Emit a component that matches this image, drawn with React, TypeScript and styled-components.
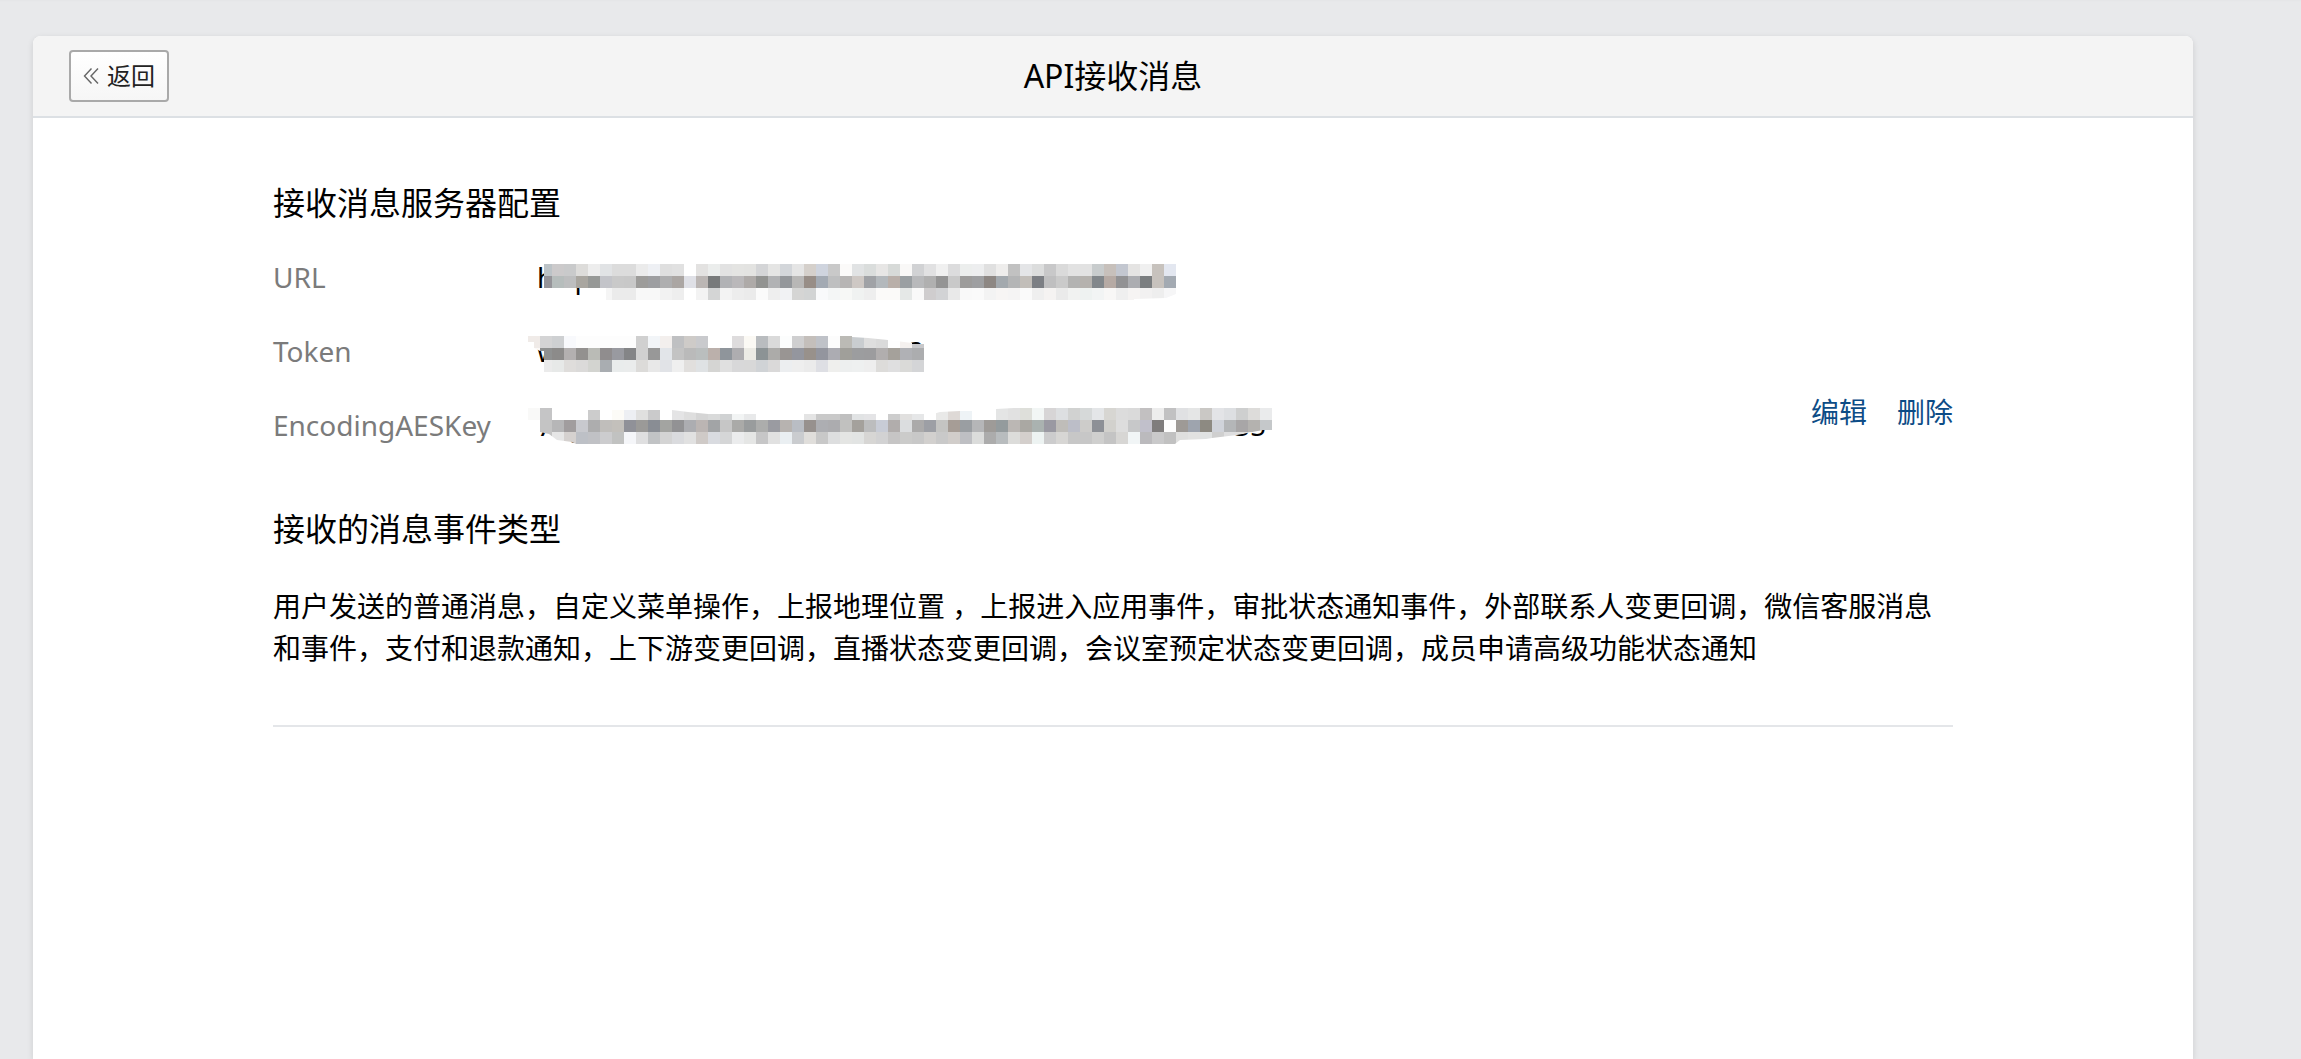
import React, { useId } from "react";
import styled, { createGlobalStyle } from "styled-components";

const GlobalStyle = createGlobalStyle`
  *, *::before, *::after { box-sizing: border-box; }
  body {
    margin: 0;
    background: #e8e9eb;
    color: #000;
    font-family: "Noto Sans", "Noto Sans CJK SC", sans-serif;
    font-size: 28px;
    line-height: 42px;
  }
`;

const Page = styled.div`
  display: flex;
  min-height: 100vh;
  padding: 36px 108px 0 33px;
  box-shadow: inset 0 2px 2px -1px rgba(0, 0, 0, 0.02);
`;

const Card = styled.main`
  flex: 1;
  min-width: 0;
  background: #fff;
  border-radius: 8px 8px 0 0;
  box-shadow: 0 2px 6px rgba(0, 0, 0, 0.12);
`;

const Header = styled.header`
  display: grid;
  grid-template-columns: 1fr auto 1fr;
  align-items: center;
  padding: 14px 36px;
  background: #f4f4f4;
  border-bottom: 2px solid #dce0e4;
  border-radius: 8px 8px 0 0;
`;

const BackButton = styled.button`
  justify-self: start;
  display: flex;
  align-items: center;
  gap: 8px;
  height: 52px;
  padding: 0 12px;
  border: 2px solid #a9a9a9;
  border-radius: 4px;
  background: linear-gradient(#fff, #f6f6f6);
  color: #222;
  font: inherit;
  font-size: 24px;
  line-height: 36px;
  cursor: pointer;
`;

const Title = styled.h1`
  margin: 0;
  font-size: 32px;
  font-weight: 400;
  line-height: 48px;
`;

const Content = styled.div`
  margin: 0 240px;
  padding: 61px 0 56px;
  border-bottom: 2px solid #e4e6e9;
`;

const Heading = styled.h2`
  margin: 0;
  font-size: 32px;
  font-weight: 400;
  line-height: 48px;
`;

const Config = styled.section`
  margin-bottom: 43px;
`;

const ConfigBody = styled.div`
  display: flex;
  align-items: flex-end;
  justify-content: space-between;
  margin-top: 13px;
`;

const Fields = styled.dl`
  margin: 0;
`;

const Field = styled.div`
  display: grid;
  grid-template-columns: 264px auto;
  align-items: center;
  justify-content: start;
  height: 74px;
`;

const Label = styled.dt`
  color: #7b7b7b;
`;

const Value = styled.dd<{ $width: number }>`
  position: relative;
  display: flex;
  justify-content: space-between;
  width: ${(p) => p.$width}px;
  margin: 0;
`;

const MosaicSvg = styled.svg<{ $top: number }>`
  position: absolute;
  left: -9px;
  top: ${(p) => p.$top}px;
  pointer-events: none;
`;

const Actions = styled.nav`
  display: flex;
  gap: 30px;
  padding-bottom: 29px;
`;

const ActionLink = styled.a`
  color: #0d4c86;
  text-decoration: none;
`;

const EventText = styled.p`
  margin: 32px 0 0;
`;

type Mosaic = { rows: string[]; clip: string; top: number };

const CELL = 12;

const fields: { label: string; head: string; tail: string; width: number; mosaic: Mosaic }[] = [
  {
    label: "URL",
    head: "https",
    tail: "",
    width: 639,
    mosaic: {
      top: 8,
      clip: "16,0 648,0 648,30 638,34 606,35 606,36 78,36 78,24 16,24",
      rows: [
        "- bcc3c7 cccacb c9cacb dddcda ededed e1e3e5 dcdcdc dcdcdc ebebeb eef0f4 dfdfdf e1e1e1 - e3e2e1 ebedec e2e2e2 e4e4e2 e3e3e1 d4d5d7 e5e5e4 d3d6da e5e5e5 d5d0cb cfd4de c9c9c9 fbfaf9 e1e3e4 dadddc e7e6e5 d7dad8 f9f8f7 d1d2d4 e1e1e2 f0f0f0 dcdcdd eceeed edeeef e0e0e0 eeedec c1c1c1 e4e5e7 dcdddd c8c8c9 dadada e2e2e2 e2e2e2 c8cccd c7c0bb c3c7d0 e5e4e3 f0f0f0 c7c2bd e3e7f0",
        "- 959499 b6bdbc bdbebf a9a6a0 979997 c3c4c9 c9c9c9 c8c8c8 9d9c9a 9d9ea1 aeaeaf aba6a3 dfe0e6 bbb6b4 787a7b b1b2b5 bab8ba aeaaa8 929391 b1b2b4 94979b b8b7b6 988e87 a3aab3 bebfc0 b7b5b4 cec8c4 a0a2a6 b3b8bc b9afa9 9a9fa2 b8b9bb b0b0b0 949494 c9c9c9 9d9c9b 9e9fa1 8d8783 a3a9ae b4b5b6 c2beb9 7c7f84 bfbfc0 cacaca b3b3b2 b5b2ae 82878b b6aaa4 929294 acadb1 7b7e80 c7c2bd a3aab2",
        "- - - - - - f5f5f5 ebebeb ebebeb f8f8f8 f8f8f8 f2f2f2 eeeeee - f3f3f3 d4d5d5 f3f3f3 ededed ebebeb fbfbfb eeeeee f1f2f4 d5d5d4 d2d4d4 f9fafb f4f6f6 f7f8f6 f0f2f1 eeeeee fbfaf9 fbfaf9 e5e8e7 f9f9f9 cfcdce d2d3d5 e9e9e9 f9f9f9 fafafa f3f3f3 f7f5f4 f5f4f4 fafafa efefef f5f3f2 eaeaea f1f2f1 eef2f1 f2f4f4 f8f7f6 efefef f6f4f3 f2f1f1 eeeeee f6f6f7",
      ],
    },
  },
  {
    label: "Token",
    head: "w",
    tail: "3",
    width: 387,
    mosaic: {
      top: 6,
      clip: "0,0 324,0 324,1 340,2 360,4 384,7 384,8 396,8 396,36 16,36 16,15 12,15 6,12 6,6 0,6",
      rows: [
        "f0ebe8 d4d4d5 ced0d2 f8f9fc fdfdfd fdfdfd fdfdfd fdfdfd fdfdfd d0d0d0 f2f5f8 f3efed bfc0c2 cecbc8 c9cacd - - dedcdd fbf9f4 b9bcbf dadada fcfdfd cfcfd0 c4bfbb bfc2c8 fcfcfc bbbab5 c9cdd0 dedede dadada fefefe f5f1ef c8c8ca",
        "fbf8f6 8f9191 8c8b8a b3b0b0 93918f babbb6 908d8e 999aa0 848587 d0d0d0 989898 e2e5e9 c3c3c3 bababa babebe bbb0ab 8f959b aeadb0 ecebe5 8c9395 acaba9 999593 94969e 98918b 93959e acacb2 a09f9a 9c9d9f 9c9c9e b1aeae a5a19b b0b1b5 acadaf",
        "- ebebeb e7e9e8 dfdddb dbdad9 d3d4d0 a9adb1 e9ecec eaecec dcdbd9 e8e8e8 e1e3e7 efefef e1dfdd dfe2e4 d5d5d3 e0e0e0 d8d8d9 d8d8d8 d0d3d6 dad9d9 eceef0 eeeeee ebebeb dedfe4 efefed edefef eef0f0 eeeeee dddcda dfdfe0 dadad8 d4d5d7",
      ],
    },
  },
  {
    label: "EncodingAESKey",
    head: "7Eg",
    tail: "35",
    width: 729,
    mosaic: {
      top: 4,
      clip: "0,0 24,0 24,2 144,2 160,4 180,6 336,6 405,6 412,4 432,3 468,3 468,1 486,0 744,0 744,22 735,22 719,25 709,27 684,30 678,31 652,32 647,36 48,36 44,34 29,32 21,26 12,24 12,12 0,12",
      rows: [
        "f9f9f8 c5c5c6 - - - cccccc - fcfbf7 edeff3 e0e0df cacacb - e4e4e5 dedede d5d5d5 d9dada d0d2d3 f2f4f4 e8e9ea - - - - e4e4e4 c9c9c9 c9c9c9 bfbfbf e1e3e4 e4e4e6 - cdcdcd e1e0df e6e7e8 - e9e9e8 ded9d6 eef3f6 - - e4e5e5 e1e1e1 dedfda f2f6f5 d7d5d6 dddfe1 d1d2d1 d6d9d9 e4e6e8 d7d6d2 dcdcdc dadada c2c0c1 ededed c1c1c2 e0e1e3 e5e6e6 cac8c5 e3e4e7 dddfe2 cecfcf dddcda eaebec",
        "- c4c4c4 b6b6b7 a19d9e c8c9ce adadae c0bebb c3c0bb 909198 9b9a98 898d94 a3a4a1 929294 acadb1 bbb5b3 a2a4a6 c6c6c6 aaaaa8 999c9d acadac 9a9ba1 b7b3b0 b9bdc4 97918e adaeb2 acacaf c1c1bf a4a19c bcbdbe c8ccd6 b1adac dbdddf abaaaa 9d9fa5 c4c4c2 a69d96 9a9ea2 b5b6b8 9e9b98 949b9d bbb7b4 aaa8a3 aab2b0 9a99a2 bfbdb9 bcbec8 cdccca 8d9096 d2d1cd dddddd c7c8c9 c1c0cb 7f7d7d fdfdfd 9e9a96 9ea4ae 8d8a82 d0d3da b4b6b8 a8a6a7 b4b2af c5c8ca",
        "- c4c4c4 e6e6e6 d5d1cf bdc0c6 c0c1c5 ccccce c1c2c1 f5f6f9 dfdfe0 c1c3c5 d4d4d4 dadbde e1e1e1 cfcac7 d9dbe0 d5d6d7 ebeced e5e6e5 c6c6c7 e1e1e1 eaeff2 cacccf e0dedb c8c8c8 dddedf e4e5e3 e2e4e3 d7d6d4 d2d2d3 c6c5c5 cbcbca c8c8c8 d2d0ce c9c9c9 d1cdca bebfc3 dbdcdb acacac b8bcbe dcdcda d4cfcc edf3f2 cccccd d7d6d4 c7c7c7 c7c7c7 cfcfce c4c4c4 d7d6d4 f1f5f6 bbbabd c9c9ca c1c1c1 dfdfde e2e2e1 e0e2e2 cfcfcf dededf e0dfdd e8e8e8 -",
      ],
    },
  },
];

// Pixelated censor strip laid over a private value.
function MosaicStrip({ rows, clip, top }: Mosaic) {
  const id = useId();
  const grid = rows.map((r) => r.split(" "));
  const width = Math.max(...grid.map((r) => r.length)) * CELL;
  const height = rows.length * CELL;
  return (
    <MosaicSvg $top={top} width={width} height={height} shapeRendering="crispEdges" aria-hidden="true">
      <clipPath id={id}>
        <polygon points={clip} />
      </clipPath>
      <g clipPath={`url(#${id})`}>
        {grid.map((row, y) =>
          row.map((c, x) => (
            <rect
              key={`${x}-${y}`}
              x={x * CELL}
              y={y * CELL}
              width={CELL}
              height={CELL}
              fill={c === "-" ? "#fff" : `#${c}`}
            />
          ))
        )}
      </g>
    </MosaicSvg>
  );
}

function BackIcon() {
  return (
    <svg width="16" height="16" viewBox="0 0 16 16" fill="none" stroke="#666" strokeWidth="1.4" aria-hidden="true">
      <path d="M8.5 0.5 L1.5 8 L8.5 15.5 M15 0.5 L8 8 L15 15.5" />
    </svg>
  );
}

export default function App() {
  return (
    <>
      <GlobalStyle />
      <Page>
        <Card>
          <Header>
            <BackButton type="button">
              <BackIcon />
              返回
            </BackButton>
            <Title>API接收消息</Title>
          </Header>
          <Content>
            <Config>
              <Heading>接收消息服务器配置</Heading>
              <ConfigBody>
                <Fields>
                  {fields.map((f) => (
                    <Field key={f.label}>
                      <Label>{f.label}</Label>
                      <Value $width={f.width}>
                        <span>{f.head}</span>
                        {f.tail && <span>{f.tail}</span>}
                        <MosaicStrip {...f.mosaic} />
                      </Value>
                    </Field>
                  ))}
                </Fields>
                <Actions>
                  <ActionLink href="#edit">编辑</ActionLink>
                  <ActionLink href="#delete">删除</ActionLink>
                </Actions>
              </ConfigBody>
            </Config>
            <section>
              <Heading>接收的消息事件类型</Heading>
              <EventText>
                用户发送的普通消息，自定义菜单操作，上报地理位置 ，上报进入应用事件，审批状态通知事件，外部联系人变更回调，微信客服消息和事件，支付和退款通知，上下游变更回调，直播状态变更回调，会议室预定状态变更回调，成员申请高级功能状态通知
              </EventText>
            </section>
          </Content>
        </Card>
      </Page>
    </>
  );
}
